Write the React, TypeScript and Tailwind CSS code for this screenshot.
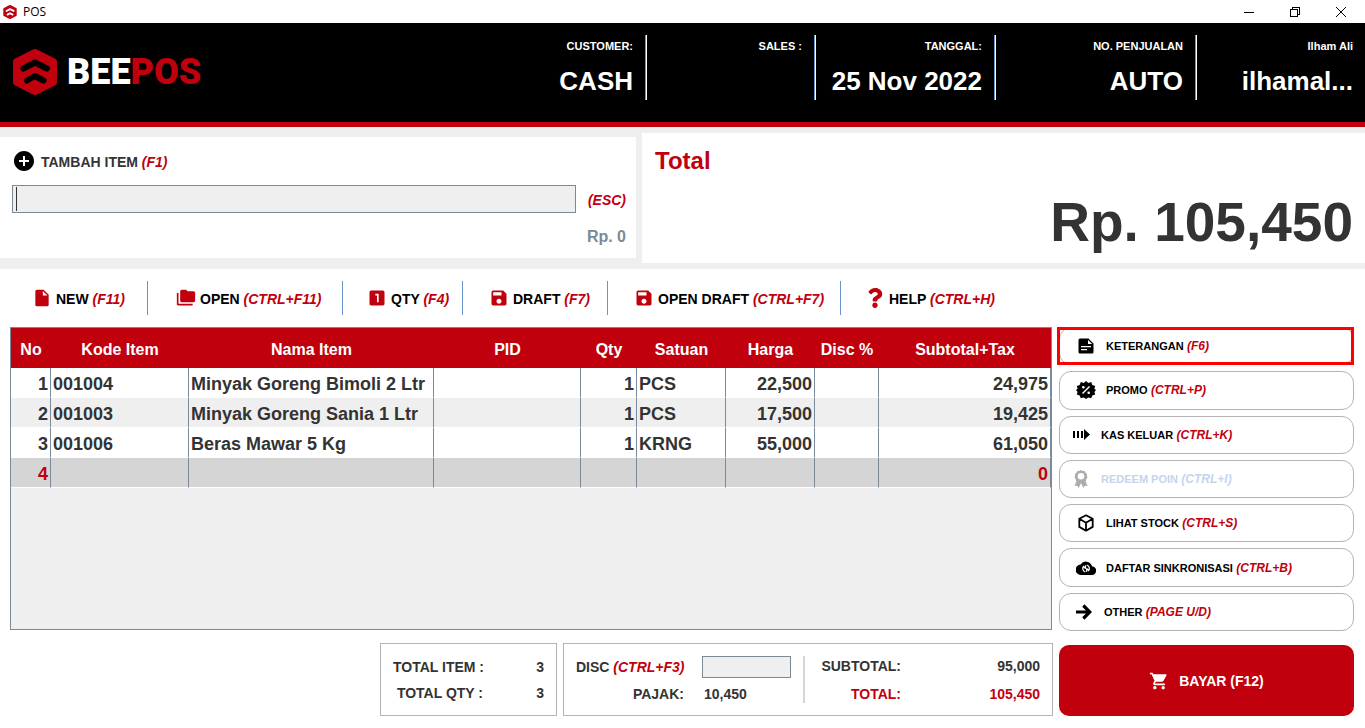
import { useState } from 'react';
import type { IconType } from 'react-icons';
import { FaQuestion } from 'react-icons/fa';
import {
  MdAddCircle,
  MdFolderCopy,
  MdInsertDriveFile,
  MdLooksOne,
  MdSave,
  MdShoppingCart,
} from 'react-icons/md';

interface Shortcut {
  label: string;
  hotkey: string;
  icon: React.ReactNode;
  className?: string;
  disabled?: boolean;
  highlighted?: boolean;
}

interface SaleItem {
  code: string;
  name: string;
  pid: string;
  qty: string;
  unit: string;
  price: string;
  disc: string;
  subtotal: string;
}

const headerInfo = [
  { label: 'CUSTOMER:', value: 'CASH' },
  { label: 'SALES :', value: '', className: 'w-[169px]' },
  { label: 'TANGGAL:', value: '25 Nov 2022', className: 'w-[180px]' },
  { label: 'NO. PENJUALAN', value: 'AUTO', className: 'w-[201px]' },
  { label: 'Ilham Ali', value: 'ilhamal...', className: 'w-[168px]' },
];

const toolIcon = (Icon: IconType) => <Icon className="size-5 text-[#c1000e]" />;

const tools: Shortcut[] = [
  { label: 'NEW', hotkey: '(F11)', icon: toolIcon(MdInsertDriveFile), className: 'w-[148px] pl-8' },
  { label: 'OPEN', hotkey: '(CTRL+F11)', icon: toolIcon(MdFolderCopy), className: 'w-[195px] pl-7' },
  { label: 'QTY', hotkey: '(F4)', icon: toolIcon(MdLooksOne), className: 'w-[120px] pl-6' },
  { label: 'DRAFT', hotkey: '(F7)', icon: toolIcon(MdSave), className: 'w-[145px] pl-[26px]' },
  { label: 'OPEN DRAFT', hotkey: '(CTRL+F7)', icon: toolIcon(MdSave), className: 'w-[233px] pl-[26px]' },
  { label: 'HELP', hotkey: '(CTRL+H)', icon: toolIcon(FaQuestion), className: 'pl-6' },
];

const columns = [
  { title: 'No', width: 40 },
  { title: 'Kode Item', width: 138 },
  { title: 'Nama Item', width: 245 },
  { title: 'PID', width: 147 },
  { title: 'Qty', width: 56 },
  { title: 'Satuan', width: 89 },
  { title: 'Harga', width: 89 },
  { title: 'Disc %', width: 64 },
  { title: 'Subtotal+Tax', width: 172 },
];

const items: SaleItem[] = [
  { code: '001004', name: 'Minyak Goreng Bimoli 2 Ltr', pid: '', qty: '1', unit: 'PCS', price: '22,500', disc: '', subtotal: '24,975' },
  { code: '001003', name: 'Minyak Goreng Sania 1 Ltr', pid: '', qty: '1', unit: 'PCS', price: '17,500', disc: '', subtotal: '19,425' },
  { code: '001006', name: 'Beras Mawar 5 Kg', pid: '', qty: '1', unit: 'KRNG', price: '55,000', disc: '', subtotal: '61,050' },
  { code: '', name: '', pid: '', qty: '', unit: '', price: '', disc: '', subtotal: '0' },
];

const NoteIcon = () => (
  <svg viewBox="0 0 16 16" className="size-4" fill="currentColor">
    <path
      fillRule="evenodd"
      d="M2 .5h8.500L15.500 5.500V14a1.500 1.500 0 0 1-1.500 1.500H2A1.500 1.500 0 0 1 .5 14V2A1.500 1.500 0 0 1 2 .5zM10 2v4h4.200zM3 8v1.300h10V8zm0 3v1.300h6V11z"
    />
  </svg>
);

const PromoIcon = () => (
  <svg viewBox="0 0 20 20" className="size-5">
    <path
      d="M10 1l2.300 2 2.900-.9 1.100 2.900 2.900.9-.8 2.800L20 10l-1.600 2 .8 2.500-2.900 1-1.100 2.800-2.900-.9L10 19l-2.300-1.600-2.900.9-1.100-2.800-2.900-1 .8-2.500L0 10l1.600-1.300-.8-2.800 2.900-.9 1.100-2.900 2.900.9z"
      fill="currentColor"
    />
    <path d="M13.500 6.500l-7 7" stroke="#fff" strokeWidth="1.500" />
    <circle cx="7.300" cy="7.300" r="1.300" fill="#fff" />
    <circle cx="12.700" cy="12.700" r="1.300" fill="#fff" />
  </svg>
);

const CashOutIcon = () => (
  <svg viewBox="0 0 17 12" className="h-3 w-[17px]" fill="currentColor">
    <path d="M0 2h2v7H0zM4 2h2v7H4zM8 2h2v7H8zM11 0l6 5.500-6 5.500z" />
  </svg>
);

const RibbonIcon = () => (
  <svg viewBox="0 0 14 18" className="h-[18px] w-3.5 text-[#acacac]">
    <path d="M3 10L.5 16l2.700-.3L4.700 18 7 13l2.300 5 1.500-2.300 2.700.3L11 10z" fill="currentColor" />
    <path
      d="M7 0l1.700.9 1.900.1.900 1.700 1.500 1.200-.1 1.900.6 1.800-1.200 1.500-.5 1.800-1.900.5L8.500 12.500 7 12l-1.500.5-1.400-1.100-1.900-.5-.5-1.800L.5 7.600l.6-1.800L1 3.900l1.500-1.200L3.400 1 5.300.9z"
      fill="currentColor"
    />
    <circle cx="7" cy="6.200" r="3.300" fill="#fff" />
  </svg>
);

const CubeIcon = () => (
  <svg
    viewBox="0 0 16 18"
    className="h-[18px] w-4"
    fill="none"
    stroke="currentColor"
    strokeWidth="1.800"
    strokeLinejoin="round"
  >
    <path d="M8 1.300l6.700 3.500v8.100L8 16.700l-6.700-3.800V4.800zM1.300 4.800L8 8.700l6.700-3.900M8 8.700v8" />
  </svg>
);

const CloudIcon = () => (
  <svg viewBox="0 0 20 14" className="h-3.5 w-5">
    <path
      d="M16 5.200A6.300 6.300 0 0 0 4.600 3.600 5 5 0 0 0 5 14h10.500A4.400 4.400 0 0 0 16 5.200z"
      fill="currentColor"
    />
    <g fill="none" stroke="#fff" strokeWidth="1.300">
      <path d="M9.300 10.800A3.300 3.300 0 0 1 7.500 5.500L9.500 7.500M9.500 4.300v3.400" />
      <path d="M10.800 4.200a3.300 3.300 0 0 1 1.800 5.300L10.600 7.500M10.600 7.300v3.400" />
    </g>
  </svg>
);

const ArrowIcon = () => (
  <svg viewBox="0 0 16 16" className="size-4" fill="none" stroke="currentColor" strokeWidth="3.200">
    <path d="M0 8h13.500M7.300 1.500L13.800 8l-6.500 6.500" />
  </svg>
);

const actions: Shortcut[] = [
  { label: 'KETERANGAN', hotkey: '(F6)', icon: <NoteIcon />, className: 'pl-4', highlighted: true },
  { label: 'PROMO', hotkey: '(CTRL+P)', icon: <PromoIcon />, className: 'pl-4' },
  { label: 'KAS KELUAR', hotkey: '(CTRL+K)', icon: <CashOutIcon />, className: 'pl-[11px]' },
  { label: 'REDEEM POIN', hotkey: '(CTRL+I)', icon: <RibbonIcon />, className: 'pl-[11px]', disabled: true },
  { label: 'LIHAT STOCK', hotkey: '(CTRL+S)', icon: <CubeIcon />, className: 'pl-4' },
  { label: 'DAFTAR SINKRONISASI', hotkey: '(CTRL+B)', icon: <CloudIcon />, className: 'pl-4' },
  { label: 'OTHER', hotkey: '(PAGE U/D)', icon: <ArrowIcon />, className: 'pl-3.5' },
];

const HexLogo = ({ className }: { className: string }) => (
  <svg viewBox="0 0 44 46" className={className}>
    <path
      d="M22 3 41 12.500V33.500L22 43 3 33.500V12.500z"
      fill="#c1000e"
      stroke="#c1000e"
      strokeWidth="6"
      strokeLinejoin="round"
    />
    <g fill="none" stroke="currentColor" strokeWidth="6" strokeLinecap="round" strokeLinejoin="round">
      <path d="M10.500 19.500 22 13.500l12 6" />
      <path d="M14 31.500 22 27l8.500 4.500" />
    </g>
  </svg>
);

const TitleBar = () => (
  <div className="flex h-[23px] items-center bg-white pr-px pl-[3px] text-black">
    <HexLogo className="size-[14px] text-white" />
    <span className="ml-1.5 font-['Open_Sans',sans-serif] text-xs font-normal">POS</span>
    <div className="ml-auto flex">
      <button aria-label="Minimize" className="flex h-[22px] w-[46px] items-center justify-center">
        <svg viewBox="0 0 10 10" className="size-2.5" stroke="currentColor" shapeRendering="crispEdges">
          <path d="M0 5.500h10" />
        </svg>
      </button>
      <button aria-label="Restore" className="flex h-[22px] w-[46px] items-center justify-center">
        <svg viewBox="0 0 10 10" className="size-2.5" fill="none" stroke="currentColor" shapeRendering="crispEdges">
          <path d="M.5 2.500h7v7h-7zM2.500 2.500v-2h7v7h-2" />
        </svg>
      </button>
      <button aria-label="Close" className="flex h-[22px] w-[46px] items-center justify-center">
        <svg viewBox="0 0 10 10" className="size-2.5" stroke="currentColor">
          <path d="M0 0l10 10M10 0L0 10" />
        </svg>
      </button>
    </div>
  </div>
);

const Header = () => (
  <header className="flex h-[104px] items-start border-b-[5px] border-[#c1000e] bg-black text-white">
    <div className="flex flex-1 items-center gap-2.5 pt-[26px] pl-[13px]">
      <HexLogo className="h-[46px] w-11 text-black" />
      <span className="font-[Roboto,sans-serif] text-4xl leading-none font-black">
        BEE<span className="text-[#c1000e]">POS</span>
      </span>
    </div>
    {headerInfo.map((info) => (
      <div
        key={info.label}
        className={`mt-3 flex h-[65px] flex-col items-end border-r border-white pr-[13px] shadow-[inset_-1px_0_0_#6b93cf] last:border-r-0 last:pr-3 last:shadow-none ${info.className ?? ''}`}
      >
        <span className="pt-[3px] text-[11px] leading-4">{info.label}</span>
        <span className="mt-[11px] text-[26px] leading-8">{info.value}</span>
      </div>
    ))}
  </header>
);

const ItemTable = () => (
  <div className="mr-px mb-px border border-[#7a8a99] bg-[#efefef]">
    <table className="w-full table-fixed border-separate border-spacing-0">
      <colgroup>
        {columns.map((col) => (
          <col key={col.title} style={{ width: col.width }} />
        ))}
      </colgroup>
      <thead>
        <tr className="h-10 bg-[#c1000e] text-base text-white">
          {columns.map((col) => (
            <th key={col.title} className="p-0 pt-1 whitespace-nowrap">
              {col.title}
            </th>
          ))}
        </tr>
      </thead>
      <tbody className="text-lg leading-[26px] whitespace-nowrap [&_td]:border-r [&_td]:border-b [&_td]:border-r-[#7a8a99] [&_td]:border-b-white [&_td]:px-0.5 [&_td]:pt-[3px] [&_td]:pb-0">
        {items.map((item, i) => (
          <tr
            key={i}
            className={
              item.code === ''
                ? 'h-[30px] bg-[#d5d5d5] text-[#c1000e]'
                : i % 2 === 0
                  ? 'h-[30px] bg-white'
                  : 'h-[30px] bg-[#efefef]'
            }
          >
            <td className="text-right">{i + 1}</td>
            <td>{item.code}</td>
            <td>{item.name}</td>
            <td>{item.pid}</td>
            <td className="text-right">{item.qty}</td>
            <td>{item.unit}</td>
            <td className="text-right">{item.price}</td>
            <td>{item.disc}</td>
            <td className="text-right">{item.subtotal}</td>
          </tr>
        ))}
      </tbody>
    </table>
  </div>
);

const App = () => {
  const [query, setQuery] = useState('');
  const [discount, setDiscount] = useState('');

  return (
    <div className="flex min-h-screen flex-col bg-white font-['Liberation_Sans',Arial,sans-serif] font-bold text-[#333333]">
      <TitleBar />
      <Header />

      <section className="grid h-[142px] grid-cols-[636fr_723fr] gap-x-1.5 bg-[#efefef]">
        <div className="mt-2.5 mb-[11px] bg-white pt-3 pr-2.5 pl-3 text-sm">
          <label htmlFor="add-item" className="flex items-center gap-1">
            <MdAddCircle className="size-6 text-black" />
            <span className="ml-px pt-0.5">
              TAMBAH ITEM <em className="text-[#c1000e]">(F1)</em>
            </span>
          </label>
          <div className="mt-3 flex items-center gap-3">
            <div className="relative flex-1">
              <input
                id="add-item"
                value={query}
                onChange={(e) => setQuery(e.target.value)}
                className="block h-7 w-full border border-[#7a8a99] bg-[#efefef] px-1 caret-transparent outline-none"
              />
              {query === '' && <span className="absolute inset-y-0.5 left-1 w-px bg-[#333333]" />}
            </div>
            <em className="pt-0.5 text-[#c1000e]">(ESC)</em>
          </div>
          <div className="mt-3 text-right text-base text-[#7a8a99]">Rp. 0</div>
        </div>
        <div className="my-1.5 flex flex-col justify-between bg-white pt-3 pr-3 pb-2 pl-[13px]">
          <h2 className="text-2xl text-[#c1000e]">Total</h2>
          <div className="text-right text-[55px] leading-[66px]">Rp. 105,450</div>
        </div>
      </section>

      <nav className="flex h-[58px] items-start pt-3 text-sm text-black">
        {tools.map((tool) => (
          <button
            key={tool.label}
            className={`flex h-[34px] items-center gap-1 border-r border-[#6b93cf] whitespace-nowrap last:border-r-0 ${tool.className}`}
          >
            {tool.icon}
            <span className="pt-0.5">
              {tool.label} <em className="text-[#c1000e]">{tool.hotkey}</em>
            </span>
          </button>
        ))}
      </nav>

      <main className="grid flex-1 grid-cols-[1fr_295px] grid-rows-[1fr_auto] gap-x-1.5 gap-y-3 pr-[11px] pb-3 pl-2.5">
        <ItemTable />

        <aside className="flex flex-col gap-1.5">
          {actions.map((action) => (
            <div key={action.label} className="relative flex flex-1">
              <button
                disabled={action.disabled}
                className={`flex flex-1 items-center rounded-xl border border-[#b3b3b3] text-xs text-black ${action.className}`}
              >
                <span className="mr-2.5 flex w-5 justify-center">{action.icon}</span>
                <span className={action.disabled ? 'text-[#c5d5ed]' : ''}>
                  <span className="text-[11px]">{action.label}</span>{' '}
                  <em className={action.disabled ? '' : 'text-[#c1000e]'}>{action.hotkey}</em>
                </span>
              </button>
              {action.highlighted && (
                <div className="pointer-events-none absolute inset-y-0 right-0 -left-0.5 border-3 border-[#ff0000]" />
              )}
            </div>
          ))}
        </aside>

        <footer className="flex h-[73px] justify-end gap-1.5 text-sm">
          <dl className="grid w-[177px] grid-cols-[90px_1fr] content-center gap-y-1.5 border border-[#b3b3b3] px-3 text-right whitespace-nowrap">
            <dt>TOTAL ITEM :</dt>
            <dd>3</dd>
            <dt>TOTAL QTY :</dt>
            <dd>3</dd>
          </dl>
          <div className="flex w-[490px] items-center border border-[#b3b3b3] px-3">
            <div className="grid grid-cols-[108px_89px] items-center gap-x-[18px] gap-y-1.5">
              <label htmlFor="disc" className="text-right whitespace-nowrap">
                DISC <em className="text-[#c1000e]">(CTRL+F3)</em>
              </label>
              <input
                id="disc"
                value={discount}
                onChange={(e) => setDiscount(e.target.value)}
                className="h-[22px] w-full border border-[#7a8a99] bg-[#efefef] px-1 outline-none"
              />
              <span className="text-right">PAJAK:</span>
              <span className="pl-0.5">10,450</span>
            </div>
            <div className="ml-3 h-[47px] w-0.5 bg-[#d5d5d5]" />
            <dl className="ml-4 grid flex-1 grid-cols-[80px_1fr] gap-y-2 text-right">
              <dt>SUBTOTAL:</dt>
              <dd>95,000</dd>
              <dt className="text-[#c1000e]">TOTAL:</dt>
              <dd className="text-[#c1000e]">105,450</dd>
            </dl>
          </div>
        </footer>

        <button className="mt-0.5 flex items-center justify-center gap-2.5 rounded-[10px] bg-[#c1000e] text-sm text-white">
          <MdShoppingCart className="size-5" />
          BAYAR (F12)
        </button>
      </main>
    </div>
  );
};

export default App;
